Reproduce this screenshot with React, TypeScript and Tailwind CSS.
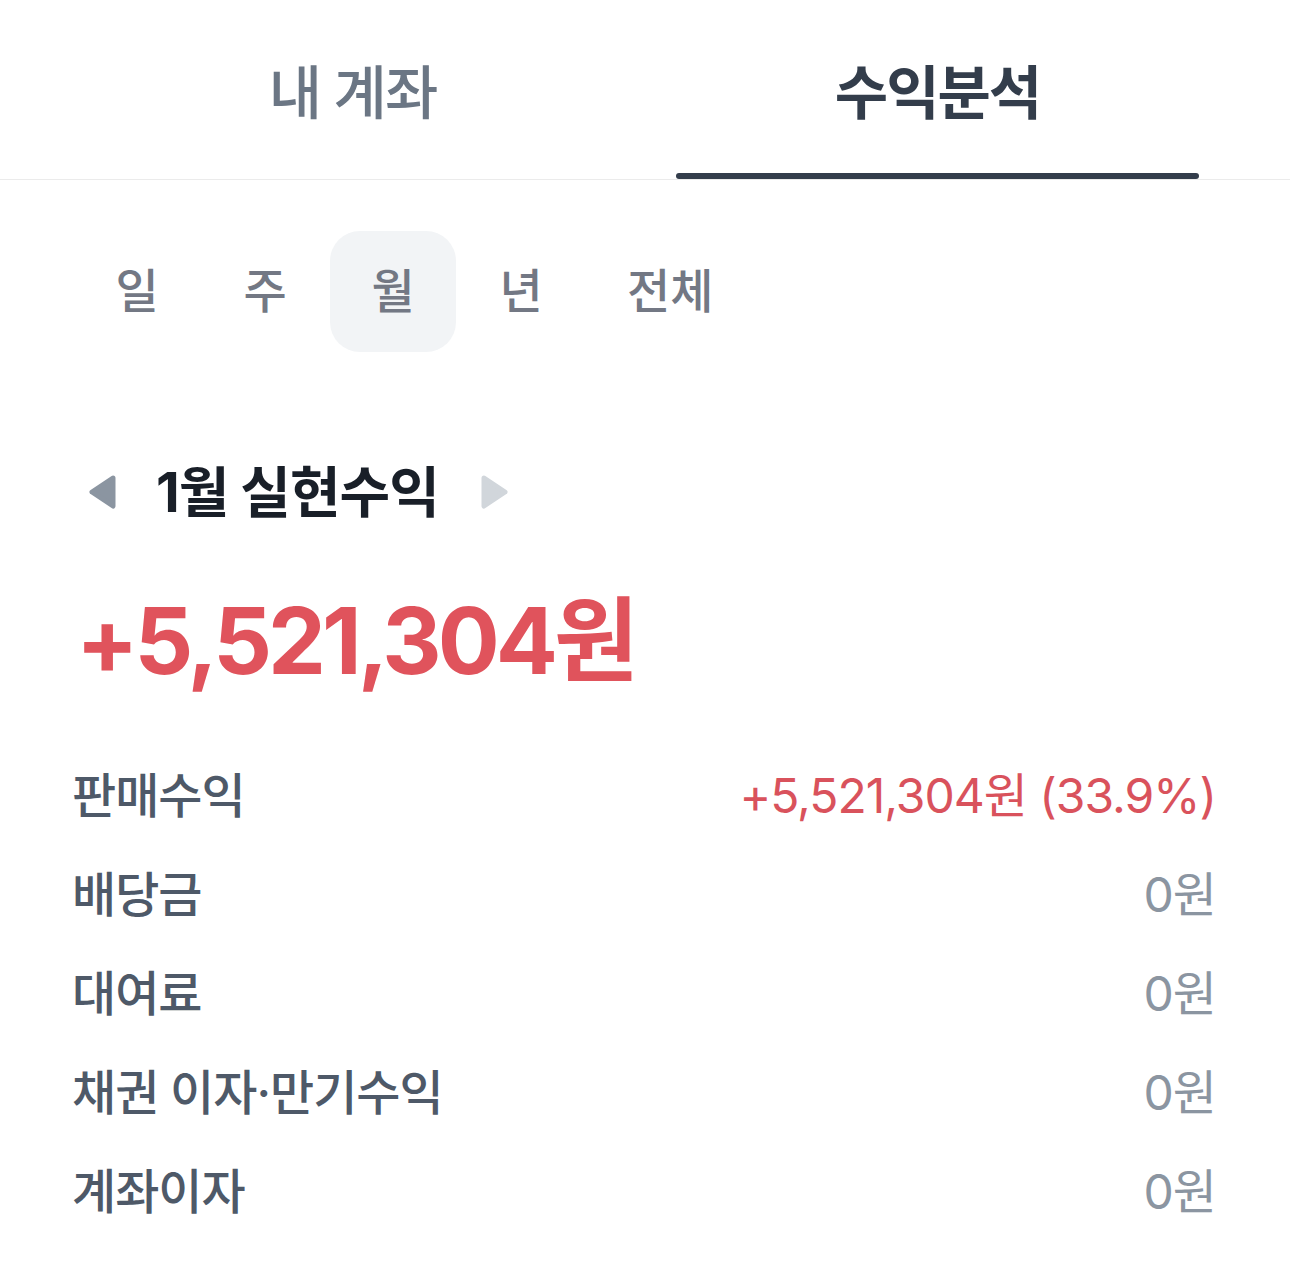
import { useState } from "react";

const font = { fontFamily: 'Inter, "Noto Sans CJK KR", sans-serif' };

const periods = ["일", "주", "월", "년", "전체"];

const rows = [
  { label: "판매수익", value: "+5,521,304원 (33.9%)", red: true },
  { label: "배당금", value: "0원" },
  { label: "대여료", value: "0원" },
  { label: "채권 이자·만기수익", value: "0원" },
  { label: "계좌이자", value: "0원" },
];

function Arrow({ dir, color }: { dir: "left" | "right"; color: string }) {
  const d = dir === "left" ? "M27 4 L6 18 L27 32 Z" : "M5 4 L26 18 L5 32 Z";
  return (
    <svg width="32" height="36" viewBox="0 0 32 36">
      <path d={d} fill={color} stroke={color} strokeWidth="5" strokeLinejoin="round" />
    </svg>
  );
}

export default function App() {
  const [tab, setTab] = useState(1);
  const [period, setPeriod] = useState(2);

  return (
    <div className="w-[1290px] min-h-[1283px] bg-white" style={font}>
      {/* 탭 */}
      <div className="flex px-[60px] border-b border-[#ebebeb]">
        {["내 계좌", "수익분석"].map((t, i) => (
          <button
            key={t}
            onClick={() => setTab(i)}
            className="flex-1 h-[179px] flex flex-col"
          >
            <span
              className={`flex-1 flex items-center justify-center pt-[14px] text-[58px] tracking-[-2px] ${
                i === tab ? "font-bold text-[#333d4b]" : "font-medium text-[#6b7684]"
              }`}
            >
              {t}
            </span>
            <div
              className={`h-[6px] mx-[31px] rounded-full ${i === tab ? "bg-[#333d4b]" : "bg-transparent"}`}
            />
          </button>
        ))}
      </div>

      {/* 기간 선택 */}
      <div className="flex gap-[2px] pl-[74px] mt-[51px]">
        {periods.map((p, i) => (
          <button
            key={p}
            onClick={() => setPeriod(i)}
            className={`h-[121px] min-w-[126px] px-[41px] rounded-[30px] text-[47px] font-medium text-[#737884] ${
              i === period ? "bg-[#f2f4f6]" : ""
            }`}
          >
            {p}
          </button>
        ))}
      </div>

      {/* 실현수익 */}
      <div className="flex items-center pl-[86px] mt-[110px] h-[60px]">
        <Arrow dir="left" color="#8b95a1" />
        <span className="ml-[38px] mr-[40px] text-[55px] font-bold text-[#191f28] tracking-[-1px]">
          1월 실현수익
        </span>
        <Arrow dir="right" color="#d1d6db" />
      </div>

      <div className="pl-[76px] mt-[64px] text-[92px] leading-[110px] font-bold text-[#e0535c] tracking-[-4px]">
        +5,521,304원
      </div>

      {/* 상세 */}
      <div className="pl-[72px] pr-[74px] mt-[50px]">
        {rows.map((r) => (
          <div key={r.label} className="flex items-center justify-between h-[99px]">
            <span className="text-[48px] font-medium text-[#4e5968] tracking-[-1px]">{r.label}</span>
            <span
              className={`text-[48px] tracking-[-1px] ${r.red ? "text-[#d9525c]" : "text-[#8b95a1]"}`}
            >
              {r.value}
            </span>
          </div>
        ))}
      </div>
    </div>
  );
}
